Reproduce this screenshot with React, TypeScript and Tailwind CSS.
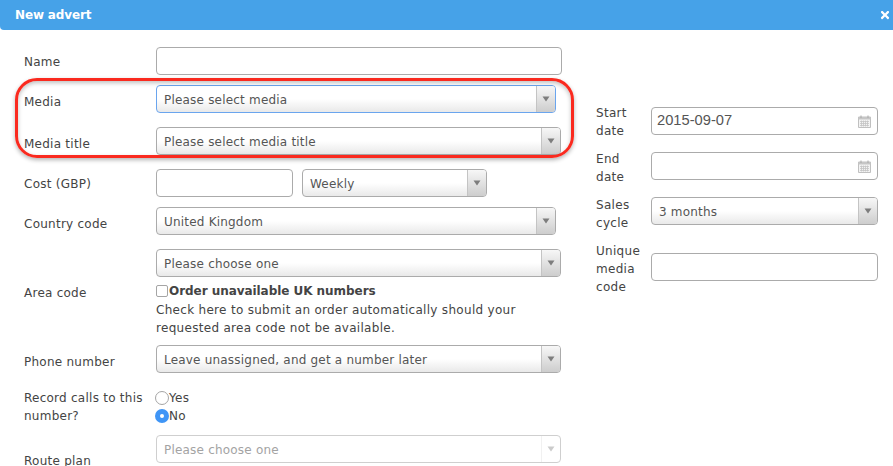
import { FaTimes } from "react-icons/fa";

function Arrow() {
  return (
    <svg width="8" height="6" viewBox="0 0 8 6" className="block">
      <path d="M0.5 0.5h7L4 5.5z" fill="#7d7d7d" />
    </svg>
  );
}

function Select({ value, className, focus, disabled }: { value: string; className: string; focus?: boolean; disabled?: boolean }) {
  const border = focus ? "border-[#6aa5ee]" : disabled ? "border-[#cfcfcf]" : "border-[#ababab]";
  const bg = disabled ? "bg-white text-[#a3a3a3]" : "bg-gradient-to-b from-white from-50% to-[#e9e9e9] text-[#555]";
  return (
    <div className={`h-[28px] flex items-stretch border rounded-[4px] overflow-hidden shrink-0 ${border} ${bg} ${className}`}>
      <div className="flex-1 pl-[7px] pt-[2px] flex items-center whitespace-nowrap tracking-[0.2px]">{value}</div>
      <div className={`w-[19px] shrink-0 border-l flex items-center justify-center ${disabled ? "border-[#dcdcdc] opacity-40" : "border-[#c4c4c4] bg-gradient-to-b from-[#f7f7f7] to-[#cdcdcd]"}`}>
        <Arrow />
      </div>
    </div>
  );
}

function Calendar() {
  return (
    <svg width="13" height="13" viewBox="0 0 13 13" className="absolute right-[6px] top-[7px]" fill="none">
      <path d="M0.5 2h12v10.5h-12z" fill="#f3f3f3" stroke="#c0c0c0" />
      <path d="M0.5 2h12v2.5h-12z" fill="#c6c6c6" />
      <path d="M3 0.5v2.5M10 0.5v2.5" stroke="#a8a8a8" />
      <path d="M2 6.5h9M2 8.5h9M2 10.5h9M3.5 5.5v6M5.5 5.5v6M7.5 5.5v6M9.5 5.5v6" stroke="#c4c4c4" strokeWidth="0.8" />
    </svg>
  );
}

function Label({ children, className }: { children: React.ReactNode; className?: string }) {
  return <div className={`w-[132px] ml-[1px] shrink-0 text-[#444] leading-[18px] tracking-[0.25px] ${className ?? ""}`}>{children}</div>;
}

function SideLabel({ children }: { children: React.ReactNode }) {
  return <div className="w-[55px] shrink-0 text-[#444] leading-[18px]">{children}</div>;
}

const inputCls = "h-[28px] border border-[#ababab] rounded-[4px] bg-white shrink-0";

export default function App() {
  return (
    <div className="w-[893px] h-[466px] overflow-hidden bg-white relative text-[12px] tracking-[0.3px] font-['DejaVu_Sans',sans-serif]">
      {/* Modal header */}
      <div className="h-[30px] bg-[#46a2e8] rounded-bl-[4px] flex items-center justify-between pl-[15px] pr-[2px]">
        <span className="text-white font-bold text-[12px] tracking-[-0.15px]">New advert</span>
        <FaTimes className="text-white w-[12px] h-[12px] mb-[1px]" />
      </div>

      <div className="flex pl-[23px]">
        {/* Left column */}
        <div className="w-[573px] shrink-0 pt-[17px]">
          <div className="flex items-center">
            <Label className="pt-[2px]">Name</Label>
            <input className={`${inputCls} w-[406px]`} readOnly />
          </div>

          <div className="flex items-center mt-[10px]">
            <Label className="pt-[6px]">Media</Label>
            <Select value="Please select media" className="w-[400px]" focus />
          </div>

          <div className="flex items-center mt-[14px]">
            <Label className="pt-[6px]">Media title</Label>
            <Select value="Please select media title" className="w-[405px]" />
          </div>

          <div className="flex items-center mt-[14px]">
            <Label className="pt-[2px]">Cost (GBP)</Label>
            <input className={`${inputCls} w-[137px]`} readOnly />
            <Select value="Weekly" className="w-[185px] ml-[9px]" />
          </div>

          <div className="flex items-center mt-[10px]">
            <Label className="pt-[6px]">Country code</Label>
            <Select value="United Kingdom" className="w-[400px]" />
          </div>

          <div className="flex mt-[14px]">
            <Label className="pt-[35px]">Area code</Label>
            <div className="w-[405px]">
              <Select value="Please choose one" className="w-[405px]" />
              <div className="flex items-center mt-[5px] h-[18px]">
                <span className="w-[12px] h-[12px] border border-[#a5a5a5] rounded-[2px] bg-white shrink-0 mr-[1px]" />
                <span className="font-bold text-[#444] tracking-[-0.05px]">Order unavailable UK numbers</span>
              </div>
              <div className="text-[#444] leading-[18px] mt-[1px]">
                Check here to submit an order automatically should your requested area code not be available.
              </div>
            </div>
          </div>

          <div className="flex items-center mt-[8px]">
            <Label className="pt-[6px]">Phone number</Label>
            <Select value="Leave unassigned, and get a number later" className="w-[405px]" />
          </div>

          <div className="flex mt-[16px]">
            <Label>Record calls to this number?</Label>
            <div className="text-[#444] leading-[18px] -ml-[1px]">
              <div className="flex items-center">
                <span className="w-[14px] h-[14px] rounded-full border border-[#a5a5a5] bg-white" />
                Yes
              </div>
              <div className="flex items-center">
                <span className="w-[14px] h-[14px] rounded-full bg-[#3f95f6] flex items-center justify-center">
                  <span className="w-[4px] h-[4px] rounded-full bg-white" />
                </span>
                No
              </div>
            </div>
          </div>

          <div className="flex mt-[10px]">
            <Label className="pt-[17px]">Route plan</Label>
            <Select value="Please choose one" className="w-[405px]" disabled />
          </div>
        </div>

        {/* Right column */}
        <div className="pt-[74px]">
          <div className="flex items-start">
            <SideLabel>Start date</SideLabel>
            <div className={`${inputCls} w-[227px] mt-[3px] relative flex items-center pl-[5px] pb-[2px] text-[#555] text-[14.7px] tracking-normal font-['Liberation_Sans',sans-serif]`}>
              2015-09-07
              <Calendar />
            </div>
          </div>
          <div className="flex items-start mt-[10px]">
            <SideLabel>End date</SideLabel>
            <div className={`${inputCls} w-[227px] mt-[2px] relative`}>
              <Calendar />
            </div>
          </div>
          <div className="flex items-start mt-[10px]">
            <SideLabel>Sales cycle</SideLabel>
            <Select value="3 months" className="w-[227px] mt-[1px]" />
          </div>
          <div className="flex items-start mt-[10px]">
            <SideLabel>Unique media code</SideLabel>
            <input className={`${inputCls} w-[227px] mt-[11px]`} readOnly />
          </div>
        </div>
      </div>

      {/* Red annotation drawn over the form */}
      <div className="absolute left-[15px] top-[78px] w-[559px] h-[80px] border-[3px] border-[#fa2a1f] rounded-[22px] shadow-[0_2px_4px_rgba(0,0,0,0.3),inset_0_2px_4px_rgba(0,0,0,0.25)] pointer-events-none" />
    </div>
  );
}
